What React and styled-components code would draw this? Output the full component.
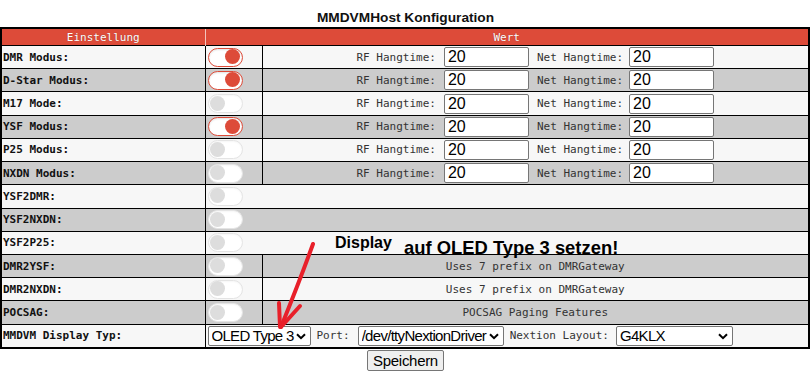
import React from "react";
import styled, { createGlobalStyle } from "styled-components";

const GlobalStyle = createGlobalStyle`
  html, body {
    margin: 0;
    padding: 0;
    background: #ffffff;
  }
  body {
    font-family: "Liberation Sans", Arial, sans-serif;
  }
`;

const Page = styled.div`
  position: relative;
  width: 811px;
  height: 374px;
  overflow: hidden;
`;

const Title = styled.h1`
  margin: 0;
  padding-top: 9px;
  height: 18px;
  line-height: 18px;
  font-family: "Liberation Sans", Arial, sans-serif;
  font-size: 13.7px;
  font-weight: bold;
  text-align: center;
  color: #111;
`;

const Frame = styled.div`
  width: 806px;
  border: 2px solid #000;
`;

const Table = styled.table`
  width: 100%;
  table-layout: fixed;
  border-collapse: collapse;
  border-style: hidden;
  font-family: "DejaVu Sans Mono", "Liberation Mono", monospace;
  font-size: 11px;
`;

const HeadCell = styled.th`
  height: 16px;
  padding: 0;
  background: #dd4b39;
  color: #ffffff;
  font-weight: normal;
  text-align: center;
  text-shadow: 0 0 1px rgba(0, 0, 0, 0.35);
  border-left: ${(p) => (p.$divider ? "1px solid #f2c4bd" : "none")};
`;

const Row = styled.tr`
  height: 23.23px;
  background: ${(p) => (p.$shaded ? "#cccccc" : "#f7f7f7")};
`;

const Label = styled.td`
  padding: 0 0 0 1px;
  border: 1px solid #000;
  color: #111;
  font-weight: bold;
  text-align: left;
  white-space: nowrap;
`;

const SwitchCell = styled.td`
  padding: 0 0 0 2px;
  border: 1px solid #000;
  vertical-align: middle;
`;

const InfoCell = styled.td`
  padding: 0;
  border: 1px solid #000;
  color: #333;
  text-align: center;
  white-space: nowrap;
`;

const Toggle = styled.span`
  position: relative;
  display: block;
  width: 35px;
  height: 19px;
  box-sizing: border-box;
  border-radius: 10px;
  border: 1.5px solid ${(p) => (p.$on ? "#dd4b39" : "#e4e4e4")};
  background: #ffffff;
  box-shadow: inset 0 1px 2px rgba(0, 0, 0, ${(p) => (p.$on ? 0.12 : 0.04)});

  &::after {
    content: "";
    position: absolute;
    top: 0.5px;
    left: ${(p) => (p.$on ? "16px" : "1px")};
    width: 15px;
    height: 15px;
    border-radius: 50%;
    background: ${(p) => (p.$on ? "#dd4b39" : "#dddddd")};
  }
`;

const Group = styled.div`
  display: flex;
  align-items: center;
  justify-content: ${(p) => (p.$left ? "flex-start" : "center")};
  padding-left: ${(p) => (p.$left ? "2px" : "0")};
  color: #333;
  font-weight: normal;
`;

const Field = styled.input`
  box-sizing: border-box;
  width: 85px;
  height: 20px;
  margin: 0 ${(p) => p.$right || 0}px 0 ${(p) => p.$left || 0}px;
  padding: 0 3px;
  border: 1px solid #767676;
  border-radius: 2px;
  background: #fff;
  font-family: "Liberation Sans", Arial, sans-serif;
  font-size: 16px;
  color: #000;
`;

const SelectBox = styled.span`
  position: relative;
  display: inline-flex;
  margin: 0 ${(p) => p.$right || 0}px 0 ${(p) => p.$left || 0}px;
`;

const Picker = styled.select`
  appearance: none;
  box-sizing: border-box;
  width: ${(p) => p.$w}px;
  height: 20px;
  margin: 0;
  padding: 0 12px 0 3px;
  border: 1px solid #767676;
  border-radius: 2px;
  background: #fff;
  font-family: "Liberation Sans", Arial, sans-serif;
  font-size: 15px;
  letter-spacing: -0.7px;
  color: #000;
`;

const Chevron = styled.svg`
  position: absolute;
  right: 5px;
  top: 7px;
  pointer-events: none;
`;

const Footer = styled.div`
  display: flex;
  justify-content: center;
  padding-top: 1px;
`;

const SaveButton = styled.button`
  box-sizing: border-box;
  width: 77px;
  height: 21px;
  padding: 0;
  border: 1px solid #767676;
  border-radius: 2px;
  background: #efefef;
  font-family: "Liberation Sans", Arial, sans-serif;
  font-size: 15px;
  letter-spacing: -0.3px;
  color: #000;
`;

const Note = styled.div`
  position: absolute;
  left: ${(p) => p.$x}px;
  top: ${(p) => p.$y}px;
  font-family: "Liberation Sans", Arial, sans-serif;
  font-size: ${(p) => p.$size}px;
  font-weight: bold;
  color: #000;
  white-space: nowrap;
`;

const Arrow = styled.svg`
  position: absolute;
  left: 0;
  top: 0;
  pointer-events: none;
`;

const modes = [
  { name: "DMR Modus:", on: true },
  { name: "D-Star Modus:", on: true },
  { name: "M17 Mode:", on: false },
  { name: "YSF Modus:", on: true },
  { name: "P25 Modus:", on: false },
  { name: "NXDN Modus:", on: false },
];

const bridges = [
  { name: "YSF2DMR:" },
  { name: "YSF2NXDN:" },
  { name: "YSF2P25:" },
  { name: "DMR2YSF:", info: "Uses 7 prefix on DMRGateway" },
  { name: "DMR2NXDN:", info: "Uses 7 prefix on DMRGateway" },
  { name: "POCSAG:", info: "POCSAG Paging Features" },
];

function Dropdown({ w, left, right, value }) {
  return (
    <SelectBox $left={left} $right={right}>
      <Picker $w={w} defaultValue={value}>
        <option value={value}>{value}</option>
      </Picker>
      <Chevron width="10" height="7" viewBox="0 0 10 7">
        <path d="M1 1.2 L5 5.2 L9 1.2" stroke="#000" strokeWidth="2" fill="none" />
      </Chevron>
    </SelectBox>
  );
}

export default function App() {
  let index = 0;

  return (
    <Page>
      <GlobalStyle />
      <Title>MMDVMHost Konfiguration</Title>
      <Frame>
        <Table>
          <colgroup>
            <col style={{ width: "203px" }} />
            <col style={{ width: "57px" }} />
            <col />
          </colgroup>
          <thead>
            <tr>
              <HeadCell>Einstellung</HeadCell>
              <HeadCell colSpan={2} $divider>Wert</HeadCell>
            </tr>
          </thead>
          <tbody>
            {modes.map((m) => {
              const shaded = index++ % 2 === 1;
              return (
                <Row key={m.name} $shaded={shaded}>
                  <Label>{m.name}</Label>
                  <SwitchCell>
                    <Toggle $on={m.on} />
                  </SwitchCell>
                  <InfoCell>
                    <Group>
                      <span>RF Hangtime:</span>
                      <Field defaultValue="20" $left={8} $right={8} />
                      <span>Net Hangtime:</span>
                      <Field defaultValue="20" $left={6} />
                    </Group>
                  </InfoCell>
                </Row>
              );
            })}
            {bridges.map((b) => {
              const shaded = index++ % 2 === 1;
              return (
                <Row key={b.name} $shaded={shaded}>
                  <Label>{b.name}</Label>
                  {b.info ? (
                    <>
                      <SwitchCell>
                        <Toggle />
                      </SwitchCell>
                      <InfoCell>{b.info}</InfoCell>
                    </>
                  ) : (
                    <SwitchCell colSpan={2}>
                      <Toggle />
                    </SwitchCell>
                  )}
                </Row>
              );
            })}
            <Row $shaded={false}>
              <Label>MMDVM Display Typ:</Label>
              <InfoCell colSpan={2}>
                <Group $left>
                  <Dropdown w={103} right={6} value="OLED Type 3" />
                  <span>Port:</span>
                  <Dropdown w={146} left={8} right={6} value="/dev/ttyNextionDriver" />
                  <span>Nextion Layout:</span>
                  <Dropdown w={117} left={7} value="G4KLX" />
                </Group>
              </InfoCell>
            </Row>
          </tbody>
        </Table>
      </Frame>
      <Footer>
        <SaveButton>Speichern</SaveButton>
      </Footer>

      <Note $x={335} $y={234} $size={16}>Display</Note>
      <Note $x={404} $y={237} $size={18.4}>auf OLED Type 3 setzen!</Note>
      <Arrow width="811" height="374" viewBox="0 0 811 374">
        <g stroke="#e8202a" strokeWidth="4" strokeLinecap="round" fill="none">
          <path d="M313 244 Q300 280 281 327" />
          <path d="M280 327 L279 303" />
          <path d="M281 327 L300 306" />
        </g>
      </Arrow>
    </Page>
  );
}
